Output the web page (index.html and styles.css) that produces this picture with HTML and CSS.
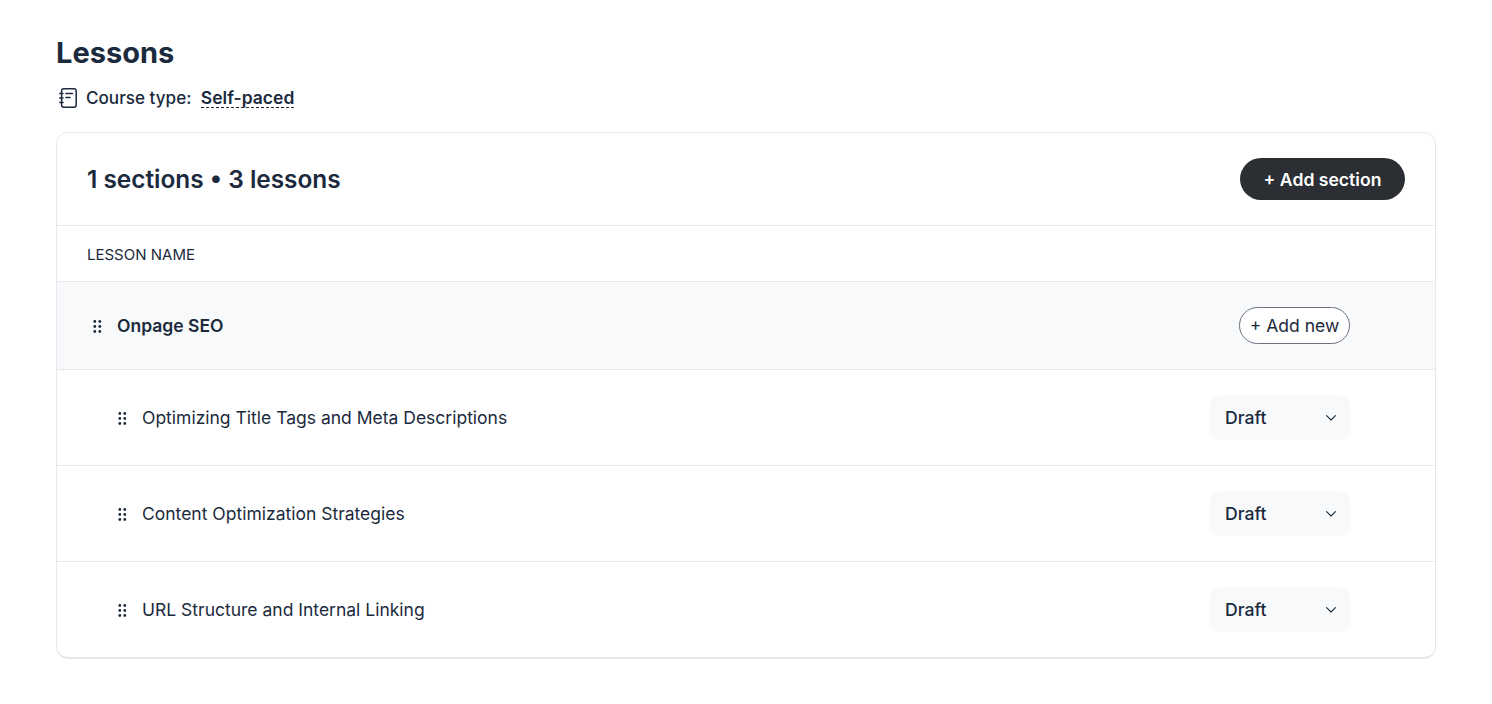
FILE: index.html
```html
<!DOCTYPE html>
<html lang="en">
<head>
<meta charset="utf-8">
<title>Lessons</title>
<link rel="stylesheet" href="styles.css">
</head>
<body>
<main class="page">
  <h1 class="title">Lessons</h1>
  <div class="course-type">
    <svg class="book" width="20" height="20" viewBox="0 0 20 20" fill="none" stroke="currentColor" stroke-width="1.5" stroke-linecap="round" stroke-linejoin="round"><rect x="3.6" y="0.8" width="14.6" height="18.4" rx="2.2"/><path d="M1.8 5.5h3.2M1.8 10h3.2M1.8 14.5h3.2"/><path d="M8 5.5h6.5M8 9.5h4"/></svg>
    <span class="course-label">Course type:</span>
    <span class="course-value">Self-paced</span>
  </div>
  <section class="card">
    <header class="card-head">
      <h2 class="summary">1 sections • 3 lessons</h2>
      <button class="btn-dark">+ Add section</button>
    </header>
    <div class="col-head">LESSON NAME</div>
    <div class="section-row">
      <div class="name-wrap">
        <svg class="grip" width="10" height="15" viewBox="0 0 10 15" fill="currentColor"><circle cx="2.8" cy="3.5" r="1.4"/><circle cx="7.8" cy="3.5" r="1.4"/><circle cx="2.8" cy="8.5" r="1.4"/><circle cx="7.8" cy="8.5" r="1.4"/><circle cx="2.8" cy="13.5" r="1.4"/><circle cx="7.8" cy="13.5" r="1.4"/></svg>
        <strong class="section-name">Onpage SEO</strong>
      </div>
      <button class="btn-outline">+ Add new</button>
    </div>
    <div class="lesson-row">
      <div class="name-wrap">
        <svg class="grip" width="10" height="15" viewBox="0 0 10 15" fill="currentColor"><circle cx="2.8" cy="3.5" r="1.4"/><circle cx="7.8" cy="3.5" r="1.4"/><circle cx="2.8" cy="8.5" r="1.4"/><circle cx="7.8" cy="8.5" r="1.4"/><circle cx="2.8" cy="13.5" r="1.4"/><circle cx="7.8" cy="13.5" r="1.4"/></svg>
        <span>Optimizing Title Tags and Meta Descriptions</span>
      </div>
      <div class="status"><span>Draft</span><svg width="12" height="12" viewBox="0 0 12 12" fill="none" stroke="currentColor" stroke-width="1.1" stroke-linecap="round" stroke-linejoin="round"><path d="M1.6 3.7 6 8l4.4-4.3"/></svg></div>
    </div>
    <div class="lesson-row">
      <div class="name-wrap">
        <svg class="grip" width="10" height="15" viewBox="0 0 10 15" fill="currentColor"><circle cx="2.8" cy="3.5" r="1.4"/><circle cx="7.8" cy="3.5" r="1.4"/><circle cx="2.8" cy="8.5" r="1.4"/><circle cx="7.8" cy="8.5" r="1.4"/><circle cx="2.8" cy="13.5" r="1.4"/><circle cx="7.8" cy="13.5" r="1.4"/></svg>
        <span>Content Optimization Strategies</span>
      </div>
      <div class="status"><span>Draft</span><svg width="12" height="12" viewBox="0 0 12 12" fill="none" stroke="currentColor" stroke-width="1.1" stroke-linecap="round" stroke-linejoin="round"><path d="M1.6 3.7 6 8l4.4-4.3"/></svg></div>
    </div>
    <div class="lesson-row">
      <div class="name-wrap">
        <svg class="grip" width="10" height="15" viewBox="0 0 10 15" fill="currentColor"><circle cx="2.8" cy="3.5" r="1.4"/><circle cx="7.8" cy="3.5" r="1.4"/><circle cx="2.8" cy="8.5" r="1.4"/><circle cx="7.8" cy="8.5" r="1.4"/><circle cx="2.8" cy="13.5" r="1.4"/><circle cx="7.8" cy="13.5" r="1.4"/></svg>
        <span>URL Structure and Internal Linking</span>
      </div>
      <div class="status"><span>Draft</span><svg width="12" height="12" viewBox="0 0 12 12" fill="none" stroke="currentColor" stroke-width="1.1" stroke-linecap="round" stroke-linejoin="round"><path d="M1.6 3.7 6 8l4.4-4.3"/></svg></div>
    </div>
  </section>
</main>
</body>
</html>
```
FILE: styles.css
```css
* { box-sizing: border-box; }
html, body { margin: 0; background: #fff; }
body { font-family: Inter, sans-serif; color: #1b2a3d; height: 704px; overflow: hidden; }
.page { padding: 33px 56px 0; }
.title { margin: 0; font-size: 29px; line-height: 40px; font-weight: 700; color: #1b2a3d; }
.course-type { display: flex; align-items: center; height: 24px; margin-top: 13px; font-size: 17.1px; line-height: 24px; }
.book { margin-left: 2px; margin-right: 8px; }
.course-label { font-weight: 500; }
.course-value { margin-left: 9.5px; font-size: 17.5px; font-weight: 600; border-bottom: 1px dashed #1b2a3d; line-height: 20px; height: 20px; }
.card { margin-top: 22px; width: 1380px; height: 527px; border: 1px solid #e6e8ec; border-bottom-width: 2px; border-radius: 12px; overflow: hidden; background: #fff; }
.card-head { display: flex; align-items: center; justify-content: space-between; height: 93px; padding: 0 30px; border-bottom: 1px solid #e6e8ec; }
.summary { margin: 0; font-size: 24.4px; line-height: 32px; font-weight: 600; }
.btn-dark { height: 42px; width: 165px; padding: 2px 0 0; border: 0; border-radius: 21px; background: #2b2e33; color: #fff; font: 600 17.6px/24px Inter, sans-serif; }
.col-head { display: flex; align-items: center; height: 56px; padding: 2px 0 0 30px; font-size: 15px; line-height: 20px; border-bottom: 1px solid #e6e8ec; }
.section-row { display: flex; align-items: center; justify-content: space-between; height: 88px; padding: 0 85px 0 35px; background: #f7f9fa; border-bottom: 1px solid #e6e8ec; }
.lesson-row { display: flex; align-items: center; justify-content: space-between; height: 96px; padding: 0 85px 0 60px; border-bottom: 1px solid #e6e8ec; }
.lesson-row:last-child { height: 95px; border-bottom: 0; }
.name-wrap { display: flex; align-items: center; gap: 15px; font-size: 17.5px; line-height: 24px; }
.grip { flex: none; }
.section-name { font-size: 17.5px; font-weight: 600; }
.btn-outline { height: 37px; width: 111px; padding: 0; border: 1px solid #6b7280; border-radius: 19px; background: #fff; color: #1b2a3d; font: 400 17.5px/24px Inter, sans-serif; }
.status { display: flex; align-items: center; justify-content: space-between; width: 140px; height: 45px; padding: 0 13px 0 15px; border-radius: 10px; background: #f7f9fa; font-size: 17.6px; font-weight: 500; }
```
